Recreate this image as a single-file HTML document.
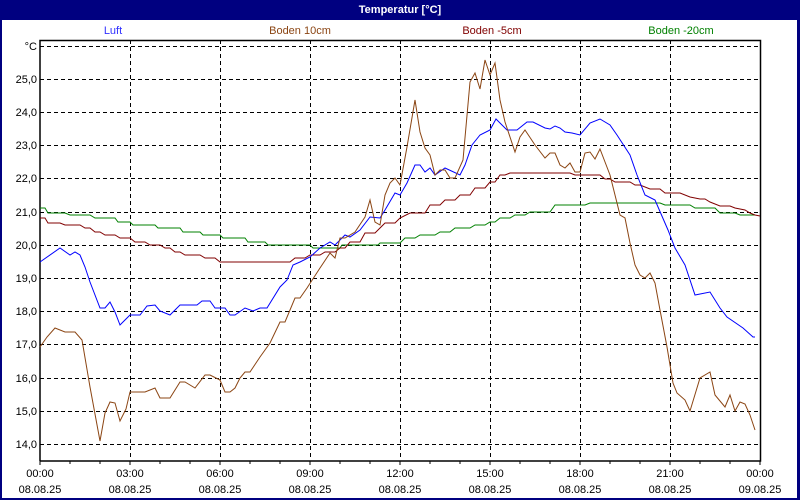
<!DOCTYPE html>
<html><head><meta charset="utf-8"><style>
html,body{margin:0;padding:0;background:#fff}
svg{display:block}
text{font-family:"Liberation Sans",sans-serif;font-size:11px}
</style></head><body>
<svg width="800" height="500" viewBox="0 0 800 500" xmlns="http://www.w3.org/2000/svg">
<rect x="0" y="0" width="800" height="500" fill="#000080"/>
<rect x="2" y="20" width="795" height="478" fill="#fff"/>
<text x="400" y="13" fill="#fff" text-anchor="middle" font-weight="bold">Temperatur [°C]</text>
<text x="113" y="34" fill="#3030ff" text-anchor="middle">Luft</text>
<text x="300" y="34" fill="#8b4513" text-anchor="middle">Boden 10cm</text>
<text x="492" y="34" fill="#800000" text-anchor="middle">Boden -5cm</text>
<text x="681" y="34" fill="#008000" text-anchor="middle">Boden -20cm</text>
<g stroke="#000" stroke-width="1" stroke-dasharray="4,3" fill="none">
<path d="M40 46.5H760M40 79.5H760M40 112.5H760M40 145.5H760M40 178.5H760M40 212.5H760M40 245.5H760M40 278.5H760M40 311.5H760M40 344.5H760M40 378.5H760M40 411.5H760M40 444.5H760"/>
<path d="M130.5 40V460M220.5 40V460M310.5 40V460M400.5 40V460M490.5 40V460M580.5 40V460M670.5 40V460"/>
</g>
<path d="M40 461V40.5H760.5V461H40" stroke="#000" stroke-width="1.5" fill="none"/>
<path d="M40 461V465M70 461V464M100 461V464M130 461V465M160 461V464M190 461V464M220 461V465M250 461V464M280 461V464M310 461V465M340 461V464M370 461V464M400 461V465M430 461V464M460 461V464M490 461V465M520 461V464M550 461V464M580 461V465M610 461V464M640 461V464M670 461V465M700 461V464M730 461V464M760 461V465" stroke="#000"/>
<g text-anchor="end" fill="#000">
<text x="37" y="50">°C</text>
<text x="37" y="83">25,0</text><text x="37" y="116">24,0</text><text x="37" y="149">23,0</text><text x="37" y="182">22,0</text><text x="37" y="216">21,0</text><text x="37" y="249">20,0</text><text x="37" y="282">19,0</text><text x="37" y="315">18,0</text><text x="37" y="348">17,0</text><text x="37" y="382">16,0</text><text x="37" y="415">15,0</text><text x="37" y="448">14,0</text>
</g>
<g text-anchor="middle" fill="#000">
<text x="40" y="477">00:00</text><text x="40" y="493">08.08.25</text>
<text x="130" y="477">03:00</text><text x="130" y="493">08.08.25</text>
<text x="220" y="477">06:00</text><text x="220" y="493">08.08.25</text>
<text x="310" y="477">09:00</text><text x="310" y="493">08.08.25</text>
<text x="400" y="477">12:00</text><text x="400" y="493">08.08.25</text>
<text x="490" y="477">15:00</text><text x="490" y="493">08.08.25</text>
<text x="580" y="477">18:00</text><text x="580" y="493">08.08.25</text>
<text x="670" y="477">21:00</text><text x="670" y="493">08.08.25</text>
<text x="760" y="477">00:00</text><text x="760" y="493">09.08.25</text>
</g>
<g fill="none" stroke-width="1">
<polyline stroke="#008000" points="40,208 45,208 48,213 65,213 70,215 90,215 95,218 115,218 118,222 130,222 133,225 155,225 158,228 180,228 183,232 200,232 203,235 220,235 223,238 245,238 248,242 265,242 268,245 310,245 313,248 340,248 342,245 378,245 380,243 400,243 405,238 415,238 420,235 435,235 440,232 450,232 455,228 470,228 475,225 485,225 490,222 495,222 500,218 510,218 515,215 525,215 530,212 550,212 555,205 585,205 590,203 660,203 665,205 690,205 695,208 715,208 720,213 735,213 740,215 755,215"/>
<polyline stroke="#800000" points="40,218 45,218 48,223 60,223 65,225 80,225 85,228 90,228 95,232 100,232 105,235 115,235 120,238 130,238 135,242 145,242 150,245 160,245 165,248 170,248 175,252 180,252 185,255 200,255 205,258 215,258 220,262 290,262 295,258 305,258 310,255 320,255 325,252 335,252 340,248 345,248 350,242 360,242 365,233 375,233 380,228 385,223 395,223 400,218 410,213 425,213 430,205 440,205 445,200 455,200 460,195 470,195 475,188 485,188 490,182 495,182 500,175 505,175 510,173 570,173 575,175 600,175 605,179 610,179 615,182 630,182 635,185 640,185 650,189 660,189 665,193 680,193 690,197 700,199 705,199 710,202 720,206 730,206 735,208 745,210 750,213 755,215 760,216"/>
<polyline stroke="#0000ff" points="40,262 60,248 70,255 75,252 80,255 85,267 90,282 100,308 105,308 110,302 115,312 120,325 130,315 140,315 147,306 155,305 160,311 170,315 180,305 197,305 202,301 210,301 215,308 225,308 230,315 235,315 245,308 253,311 260,308 267,308 280,287 287,280 293,265 300,262 310,257 320,248 330,242 335,245 345,235 350,237 360,230 370,217 380,218 385,210 395,193 400,195 407,183 415,165 420,165 425,172 430,168 435,175 445,168 460,175 465,165 472,145 480,135 490,130 496,119 507,130 517,130 527,122 533,122 545,128 550,129 555,126 560,128 565,132 572,133 580,135 590,123 600,119 610,125 617,135 630,155 637,175 645,195 655,200 668,230 675,248 685,265 695,295 710,292 720,308 727,317 743,328 753,337 755,337"/>
<polyline stroke="#8b4513" points="40,347 47,337 55,328 65,332 75,332 82,340 90,387 100,441 105,413 110,402 115,403 120,421 126,409 130,392 145,392 155,388 160,398 170,398 180,382 185,382 195,388 205,375 210,375 220,380 225,392 230,392 235,388 240,378 245,372 250,372 260,357 270,343 280,322 285,322 295,298 300,298 307,288 320,268 330,253 335,258 340,238 345,238 355,232 365,217 370,200 375,222 380,225 385,195 390,183 395,178 400,185 407,147 415,100 420,132 425,148 430,155 435,175 440,170 445,170 450,178 455,178 463,160 470,82 475,73 480,89 485,60 490,75 495,63 500,100 505,122 515,152 520,137 525,130 535,145 545,158 550,153 555,153 560,165 565,168 570,163 575,172 580,172 585,153 590,152 595,159 600,149 610,175 615,195 620,215 625,218 630,243 635,265 640,275 645,278 650,273 655,283 660,310 667,347 673,383 677,393 685,400 690,411 700,378 710,372 715,395 725,407 730,395 735,411 740,402 745,404 750,415 755,430"/>
</g>
</svg>
</body></html>
